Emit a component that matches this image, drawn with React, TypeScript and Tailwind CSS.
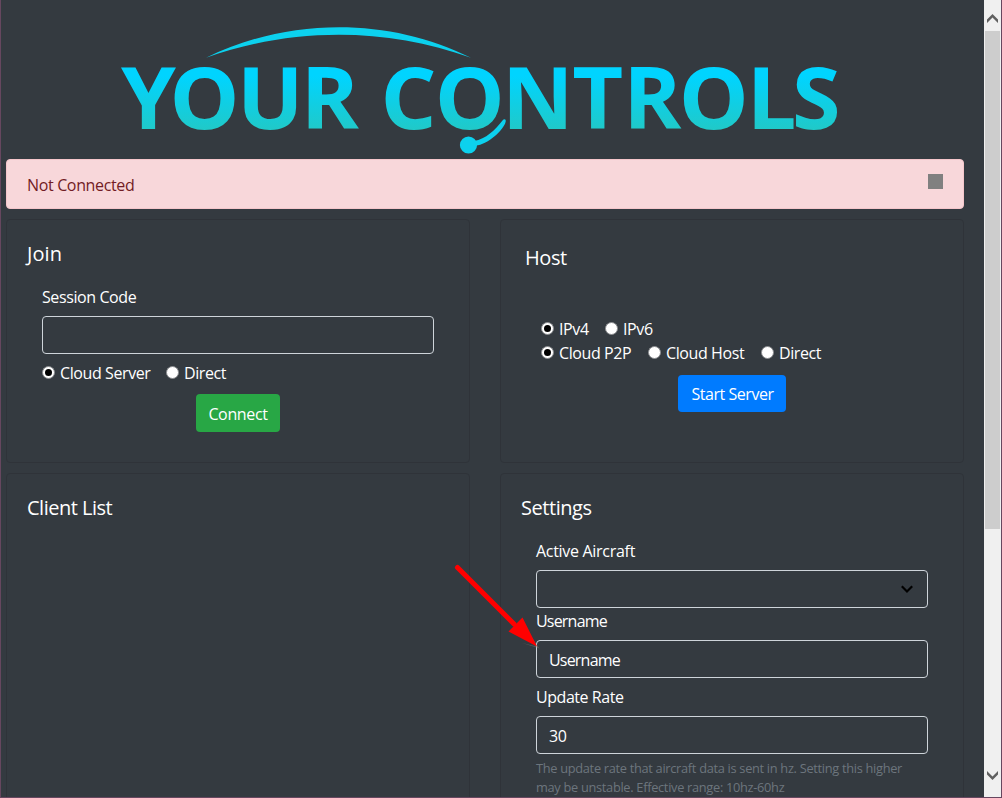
import type { ReactNode } from "react";

function Logo() {
  return (
    <svg className="block h-[158px] w-full shrink-0" viewBox="1 0 983 158" role="img" aria-label="Your Controls">
      <defs>
        <linearGradient id="letters" gradientUnits="userSpaceOnUse" x1="0" y1="70" x2="0" y2="130">
          <stop offset="0.1" stopColor="#00d4ff" />
          <stop offset="1" stopColor="#20c9c8" />
        </linearGradient>
      </defs>
      <path d="M206 57.8C288 17 390 17 471 57.8C386 27 292 27 206 57.8Z" fill="#0cd1ee" />
      <text
        y="129.400"
        x="117.500 164.500 230 292 369.500 422 487.500 555.500 605 659 725 769"
        transform="scale(1.03 1)"
        fill="url(#letters)"
        className="font-['Open_Sans',sans-serif] text-[85.5px] font-bold"
      >
        YOURCONTROLS
      </text>
      <circle cx="468.5" cy="145" r="8.6" fill="#0cd1ee" />
      <path d="M474 141C486 139 495 130 502.5 120.5C504 118.400 506.200 119 505.700 121.500C504 130 487 145 476 145.500Z" fill="#0cd1ee" />
    </svg>
  );
}

function Radio({ label, checked = false, className = "" }: { label: string; checked?: boolean; className?: string }) {
  return (
    <label className={`flex h-6 items-start whitespace-nowrap ${className}`}>
      <span className="mt-[5px] mr-[5px] flex size-[13px] shrink-0 items-center justify-center rounded-full border border-[#8a8c8f] bg-white">
        {checked && <span className="size-[7px] rounded-full bg-black" />}
      </span>
      {label}
    </label>
  );
}

function Field({ children }: { children?: ReactNode }) {
  return (
    <div className="mt-[7px] flex h-[38px] w-full items-start justify-between rounded-[4px] border border-[#ced4da] px-3 pt-[7px]">
      {children}
    </div>
  );
}

function Card({ children, className = "" }: { children: ReactNode; className?: string }) {
  return <section className={`w-[464px] rounded-[4px] border border-[#2f3339] px-5 ${className}`}>{children}</section>;
}

function Title({ children, className = "tracking-[-0.45px]" }: { children: ReactNode; className?: string }) {
  return <h5 className={`h-6 pt-px text-[20px] leading-6 ${className}`}>{children}</h5>;
}

function Scrollbar() {
  return (
    <div className="flex w-[17px] shrink-0 flex-col items-center bg-[#f0f0f0]">
      <svg className="mt-[14px] h-[9px] w-[11px]" viewBox="0 0 11 9">
        <path d="M0 5.500L5.500 0L11 5.500V9L5.500 3.500L0 9Z" fill="#606060" />
      </svg>
      <div className="mt-2 h-[498px] w-[15px] bg-[#cdcdcd]" />
      <svg className="mt-auto mb-[17px] h-[9px] w-[11px]" viewBox="0 0 11 9">
        <path d="M0 0L5.500 5.500L11 0V3.500L5.500 9L0 3.500Z" fill="#606060" />
      </svg>
    </div>
  );
}

export default function App() {
  return (
    <div className="relative flex h-[798px] w-[1002px] overflow-hidden border-x border-b border-[#66475f] bg-[#343a40] font-['Open_Sans','Noto_Sans',sans-serif] text-[16px] leading-6 tracking-[-0.4px] text-white">
      <main className="min-w-0 flex-1">
        <Logo />
        <div className="mt-px ml-[5px] w-[958px]">
          <div className="flex h-[50px] items-start justify-between rounded-[4px] border border-[#f5c6cb] bg-[#f8d7da] px-5 text-[#721c24]">
            <span className="mt-[13px] tracking-[-0.35px]">Not Connected</span>
            <span className="mt-[14px] size-[15px] bg-[#808080]" />
          </div>
          <div className="mt-2.5 flex justify-between">
            <Card className="h-[244px] pt-[21px]">
              <Title className="tracking-[0.1px]">Join</Title>
              <div className="mt-5 px-[15px]">
                <div>Session Code</div>
                <Field />
                <div className="mt-[7px] flex">
                  <Radio label="Cloud Server" checked className="w-[124px]" />
                  <Radio label="Direct" />
                </div>
                <button className="mx-auto mt-[9px] block h-[38px] w-[84px] rounded-[4px] bg-[#28a745] pt-0.5 tracking-[-0.35px]">
                  Connect
                </button>
              </div>
            </Card>
            <Card className="h-[244px] pt-[25px]">
              <div className="pl-1">
                <Title>Host</Title>
              </div>
              <div className="mt-12 pl-5">
                <div className="flex">
                  <Radio label="IPv4" checked className="w-16" />
                  <Radio label="IPv6" />
                </div>
                <div className="flex">
                  <Radio label="Cloud P2P" checked className="w-[107px]" />
                  <Radio label="Cloud Host" className="w-[113px]" />
                  <Radio label="Direct" />
                </div>
              </div>
              <button className="mx-auto mt-2.5 block h-[37px] w-[108px] rounded-[4px] bg-[#007bff] pt-px pl-px tracking-[-0.45px]">
                Start Server
              </button>
            </Card>
          </div>
          <div className="mt-2.5 flex justify-between">
            <Card className="h-[400px] pt-[21px]">
              <Title className="tracking-[-0.5px]">Client List</Title>
            </Card>
            <Card className="h-[400px] pt-[21px]">
              <Title>Settings</Title>
              <div className="mt-5 px-[15px]">
                <div className="tracking-[-0.3px]">Active Aircraft</div>
                <Field>
                  <span />
                  <svg className="mt-[7px] mr-[2px] h-[9px] w-[12px]" viewBox="0 0 12 9">
                    <path d="M0.800 1.300L6 6.500L11.200 1.300" fill="none" stroke="#000" strokeWidth="2.2" />
                  </svg>
                </Field>
                <div className="mt-px tracking-[-0.8px]">Username</div>
                <Field>
                  <span className="tracking-[-0.8px]">Username</span>
                </Field>
                <div className="mt-[7px] tracking-[-0.45px]">Update Rate</div>
                <Field>30</Field>
                <p className="mt-[5px] text-[12.8px] leading-[19px] tracking-[-0.3px] whitespace-nowrap text-[#6c757d]">
                  The update rate that aircraft data is sent in hz. Setting this higher
                  <br />
                  may be unstable. Effective range: 10hz-60hz
                </p>
              </div>
            </Card>
          </div>
        </div>
      </main>
      <Scrollbar />
      <svg className="pointer-events-none absolute top-[560px] left-[449px] h-[90px] w-[95px]" viewBox="450 560 95 90">
        <path d="M539.500 648.500L528 632L535 646L522 643Z" fill="#8a8578" opacity="0.4" />
        <path d="M457.500 567.500L514 624" stroke="#f00" strokeWidth="5" fill="none" strokeLinecap="round" />
        <path d="M522.500 617.500L537 646.500L508.500 631.500L513.500 626.500L518 622Z" fill="#f00" />
      </svg>
    </div>
  );
}
